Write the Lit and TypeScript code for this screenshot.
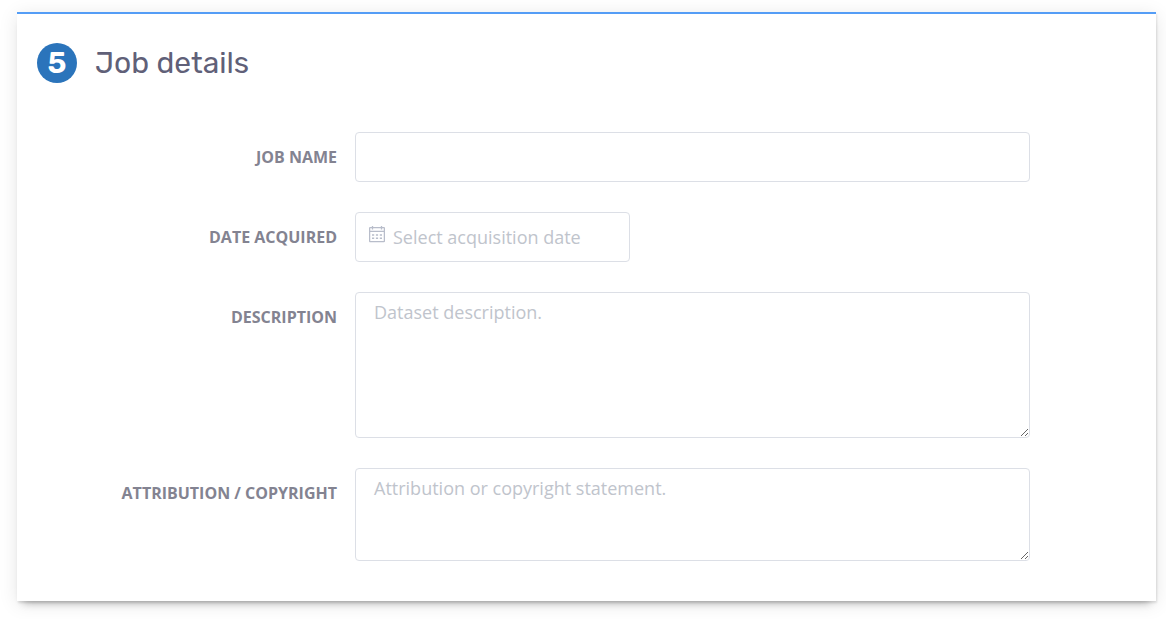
import { LitElement, html, css } from "lit";
import { customElement, property } from "lit/decorators.js";

@customElement("app-root")
export class AppRoot extends LitElement {
  @property({ type: Number }) step = 5;

  static styles = css`
    :host {
      display: block;
      box-sizing: border-box;
      padding: 12px 10px 18px 17px;
      background: #fff;
      color: #606078;
      font-family: "Open Sans", "Noto Sans", sans-serif;
      font-size: 18px;
    }
    *,
    *::before {
      box-sizing: border-box;
    }
    .card {
      border-top: 2px solid #549df6;
      background: #fff;
      padding: 29px 20px 40px;
      box-shadow: 0 7px 8px -6px rgba(0, 0, 0, 0.32), 1px 2px 2px rgba(0, 0, 0, 0.1), 0 3px 18px rgba(0, 0, 0, 0.1);
    }
    .head {
      display: flex;
      align-items: center;
      gap: 18px;
      margin-bottom: 49px;
    }
    .step {
      display: flex;
      align-items: center;
      justify-content: center;
      width: 40px;
      height: 40px;
      border-radius: 50%;
      background: #2b74bb;
      color: #fff;
      font: 600 30px/40px Rubik, Inter, sans-serif;
    }
    .title {
      margin: 0;
      font: 400 30px/40px Rubik, Inter, sans-serif;
    }
    .form {
      display: flex;
      flex-direction: column;
      gap: 30px;
    }
    .row {
      display: grid;
      grid-template-columns: 300px minmax(0, 1fr);
      column-gap: 18px;
      align-items: start;
      padding-right: 106px;
    }
    .label {
      text-align: right;
      text-transform: uppercase;
      font-size: 16px;
      font-weight: 700;
      line-height: 50px;
      color: #838391;
    }
    .control {
      display: block;
      width: 100%;
      margin: 0;
      border: 1px solid #dcdfe6;
      border-radius: 4px;
      background: #fff;
      color: #606266;
      font: 400 18px/27px "Open Sans", "Noto Sans", sans-serif;
      outline: none;
    }
    .control:focus,
    .date:focus-within {
      border-color: #549df6;
    }
    .text {
      height: 50px;
      padding: 0 18px;
    }
    ::placeholder {
      color: #c0c4cc;
      opacity: 1;
    }
    .area {
      padding: 6px 18px;
      resize: vertical;
    }
    .tall {
      height: 146px;
    }
    .short {
      height: 93px;
    }
    .date {
      display: flex;
      align-items: center;
      gap: 8px;
      width: 275px;
      height: 50px;
      padding: 0 13px;
    }
    .icon {
      flex: none;
      width: 16px;
      height: 18px;
      margin-bottom: 6px;
    }
    .date-input {
      flex: 1;
      min-width: 0;
      height: 48px;
      border: 0;
      padding: 0;
      outline: none;
      background: none;
      color: inherit;
      font: inherit;
    }
  `;

  render() {
    return html`
      <section class="card">
        <header class="head">
          <span class="step">${this.step}</span>
          <h2 class="title">Job details</h2>
        </header>
        <form class="form">
          <div class="row">
            <label class="label" for="name">Job name</label>
            <input class="control text" id="name" type="text" />
          </div>
          <div class="row">
            <label class="label" for="date">Date acquired</label>
            <div class="control date">
              <svg class="icon" viewBox="0 0 16 18" fill="none" stroke="#b8bdca" stroke-width="1.3" aria-hidden="true">
                <rect x=".6" y="2.6" width="14.8" height="14" rx=".6" />
                <path d="M.5 6.4h15M3.5 1v3.4M12.5 1v3.4" />
                <path stroke-width="1.5" d="M3 10h2.2M6.9 10h2.2M10.8 10h2.2M3 13.2h2.2M6.9 13.2h2.2M10.8 13.2h2.2" />
              </svg>
              <input class="date-input" id="date" type="text" placeholder="Select acquisition date" />
            </div>
          </div>
          <div class="row">
            <label class="label" for="description">Description</label>
            <textarea class="control area tall" id="description" placeholder="Dataset description."></textarea>
          </div>
          <div class="row">
            <label class="label" for="attribution">Attribution / Copyright</label>
            <textarea class="control area short" id="attribution" placeholder="Attribution or copyright statement."></textarea>
          </div>
        </form>
      </section>
    `;
  }
}
